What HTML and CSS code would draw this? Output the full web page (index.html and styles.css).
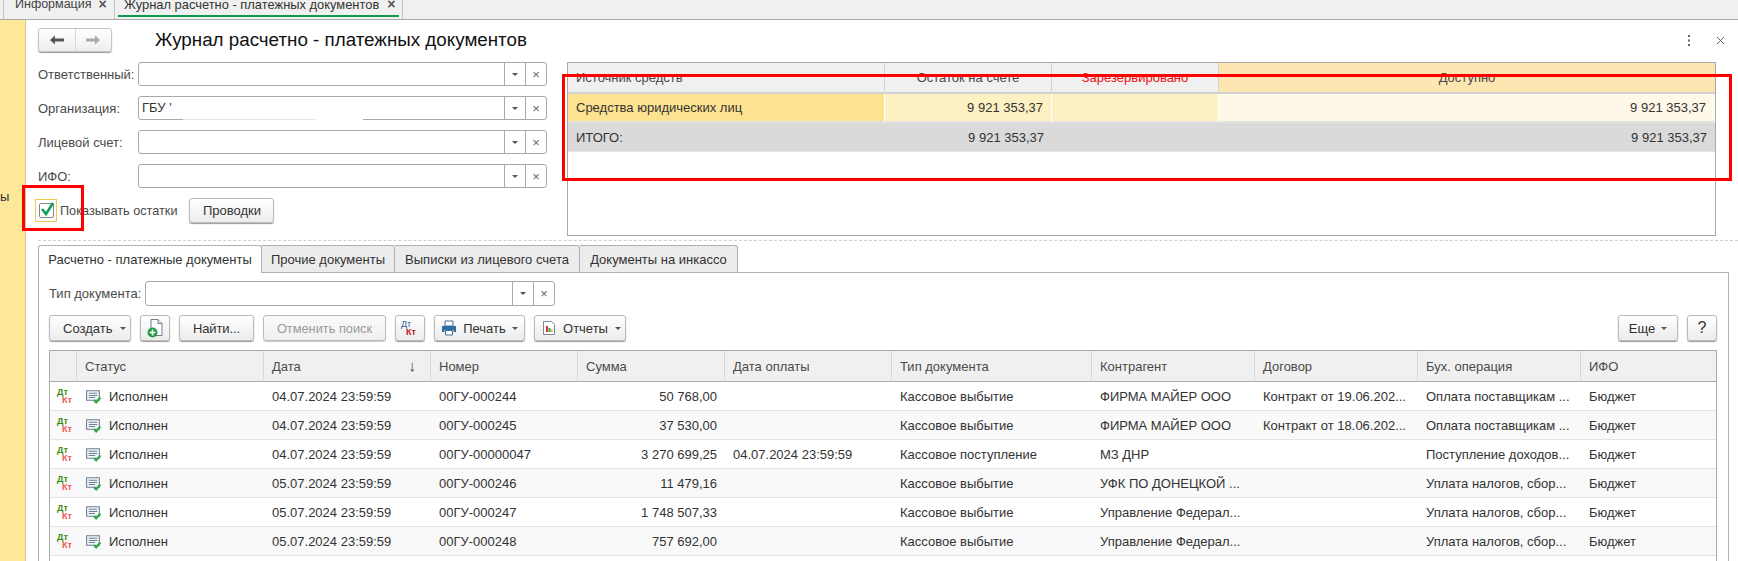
FILE: index.html
```html
<!DOCTYPE html>
<html lang="ru">
<head>
    <meta charset="UTF-8">
    <title>Журнал расчетно - платежных документов</title>
    <link rel="stylesheet" href="styles.css">
</head>
<body>
    <svg class="sprite" width="0" height="0">
        <symbol id="ico-status" viewBox="0 0 16 14">
            <path d="M1.500 1.500h12v9h-12z" fill="#f4f6f8" stroke="#6b7f92"/>
            <path d="M3.500 4h8M3.500 6h8M3.500 8h6" stroke="#6b7f92"/>
            <path d="M8.500 10.500l2 2 4-4.500" fill="none" stroke="#2fa84a" stroke-width="2"/>
        </symbol>
    </svg>

    <div class="tabbar">
        <div class="tab-item"><span class="tab-title">Информация</span> <span class="tab-close">×</span></div>
        <div class="tab-item tab-item-active">
            <span class="tab-title">Журнал расчетно - платежных документов</span>
            <span class="tab-close">×</span>
        </div>
    </div>

    <div class="main">
        <div class="sidebar"><span class="sidebar-text">ы</span></div>

        <div class="content">
            <div class="top-head">
                <div class="nav-buttons">
                    <span class="nav-btn">
                        <svg width="16" height="12" viewBox="0 0 16 12"><path d="M1 6l5-4.500v3h9v3H6v3z" fill="#555"/></svg>
                    </span>
                    <span class="nav-btn">
                        <svg width="16" height="12" viewBox="0 0 16 12"><path d="M15 6l-5-4.500v3H1v3h9v3z" fill="#aaa"/></svg>
                    </span>
                </div>
                <h1 class="page-title">Журнал расчетно - платежных документов</h1>
                <div class="top-menu">
                    <svg width="4" height="13" viewBox="0 0 4 13"><path d="M1 1h2v2H1zM1 5.500h2v2H1zM1 10h2v2H1z" fill="#666"/></svg>
                    <svg class="top-close" width="9" height="9" viewBox="0 0 9 9"><path d="M1 1l7 7M8 1l-7 7" stroke="#666" fill="none"/></svg>
                </div>
            </div>

            <div class="top-body">
                <div class="filter-form">
                    <div class="field">
                        <label class="field-label">Ответственный:</label>
                        <div class="combo"><span class="combo-value"></span><span class="combo-btn"><i class="caret"></i></span><span class="combo-btn">×</span></div>
                    </div>
                    <div class="field">
                        <label class="field-label">Организация:</label>
                        <div class="combo"><span class="combo-value">ГБУ '</span><span class="combo-btn"><i class="caret"></i></span><span class="combo-btn">×</span><span class="redact"></span></div>
                    </div>
                    <div class="field">
                        <label class="field-label">Лицевой счет:</label>
                        <div class="combo"><span class="combo-value"></span><span class="combo-btn"><i class="caret"></i></span><span class="combo-btn">×</span></div>
                    </div>
                    <div class="field">
                        <label class="field-label">ИФО:</label>
                        <div class="combo"><span class="combo-value"></span><span class="combo-btn"><i class="caret"></i></span><span class="combo-btn">×</span></div>
                    </div>
                    <div class="check-row">
                        <span class="check-focus">
                            <span class="check-box">
                                <svg width="17" height="16" viewBox="0 0 17 16"><path d="M3 8l4 5 7-11" fill="none" stroke="#0f9d58" stroke-width="2.500"/></svg>
                            </span>
                        </span>
                        <span class="check-label">Показывать остатки</span>
                        <button class="btn btn-post">Проводки</button>
                    </div>
                </div>

                <div class="balance-box">
                    <table class="balance-table">
                        <colgroup>
                            <col class="bal-col-1"><col class="bal-col-2"><col class="bal-col-3"><col>
                        </colgroup>
                        <thead>
                            <tr>
                                <th class="bal-left">Источник средств</th>
                                <th>Остаток на счете</th>
                                <th class="bal-reserved">Зарезервировано</th>
                                <th class="bal-avail">Доступно</th>
                            </tr>
                        </thead>
                        <tbody>
                            <tr class="bal-row">
                                <td class="bal-left bal-source">Средства юридических лиц</td>
                                <td class="bal-num bal-light">9 921 353,37</td>
                                <td class="bal-num bal-light"></td>
                                <td class="bal-num bal-pale">9 921 353,37</td>
                            </tr>
                            <tr class="bal-total">
                                <td class="bal-left">ИТОГО:</td>
                                <td class="bal-num">9 921 353,37</td>
                                <td class="bal-num"></td>
                                <td class="bal-num">9 921 353,37</td>
                            </tr>
                        </tbody>
                    </table>
                </div>
            </div>

            <div class="dash-line"></div>

            <div class="tabs">
                <div class="doc-tab doc-tab-active">Расчетно - платежные документы</div>
                <div class="doc-tab doc-tab-2">Прочие документы</div>
                <div class="doc-tab doc-tab-3">Выписки из лицевого счета</div>
                <div class="doc-tab doc-tab-4">Документы на инкассо</div>
            </div>

            <div class="tab-panel">
                <div class="field doc-field">
                    <label class="field-label doc-label">Тип документа:</label>
                    <div class="combo"><span class="combo-value"></span><span class="combo-btn"><i class="caret"></i></span><span class="combo-btn">×</span></div>
                </div>

                <div class="toolbar">
                    <button class="btn btn-create">Создать <i class="caret"></i></button>
                    <button class="btn btn-icon">
                        <svg width="16" height="20" viewBox="0 0 16 20">
                            <path d="M4 1.500h7l4 4v12H4z" fill="#fff" stroke="#6b7f92"/>
                            <path d="M11 1.500v4h4" fill="#dfe6ec" stroke="#6b7f92"/>
                            <circle cx="5.500" cy="14.500" r="5" fill="#1f9d45"/>
                            <path d="M5.500 11.500v6M2.500 14.500h6" stroke="#fff" stroke-width="1.600"/>
                        </svg>
                    </button>
                    <button class="btn btn-find">Найти...</button>
                    <button class="btn btn-cancel" disabled>Отменить поиск</button>
                    <button class="btn btn-icon btn-dtkt">
                        <span class="dtkt dtkt-tool"><b class="dt">Дт</b><b class="kt">Кт</b></span>
                    </button>
                    <button class="btn btn-print">
                        <svg width="16" height="16" viewBox="0 0 16 16">
                            <path d="M4 1h8v5H4z" fill="#fff" stroke="#4a6f94"/>
                            <path d="M1 6h14v6h-2.500v-2h-9v2H1z" fill="#2f6ea5"/>
                            <path d="M4.500 10.500h7v4.500h-7z" fill="#fff" stroke="#4a6f94"/>
                        </svg>
                        Печать <i class="caret"></i>
                    </button>
                    <button class="btn btn-reports">
                        <svg width="14" height="16" viewBox="0 0 14 16">
                            <path d="M1.500 1.500h8l3 3v10h-11z" fill="#fff" stroke="#7b8a99"/>
                            <path d="M4 6h2v6H4z" fill="#d93636"/>
                            <path d="M6.500 8h2v4h-2z" fill="#2fa84a"/>
                            <path d="M9 9.500h1.500V12H9z" fill="#e0a526"/>
                        </svg>
                        Отчеты <i class="caret"></i>
                    </button>
                    <button class="btn btn-more">Еще <i class="caret"></i></button>
                    <button class="btn btn-help">?</button>
                </div>

                <div class="grid-wrap">
                    <table class="doc-grid">
                        <colgroup>
                            <col class="c-ico"><col class="c-status"><col class="c-date"><col class="c-num"><col class="c-sum"><col class="c-paid"><col class="c-type"><col class="c-agent"><col class="c-contract"><col class="c-op"><col>
                        </colgroup>
                        <thead>
                            <tr>
                                <th></th>
                                <th>Статус</th>
                                <th class="th-sorted">Дата <span class="sort-arrow">↓</span></th>
                                <th>Номер</th>
                                <th>Сумма</th>
                                <th>Дата оплаты</th>
                                <th>Тип документа</th>
                                <th>Контрагент</th>
                                <th>Договор</th>
                                <th>Бух. операция</th>
                                <th>ИФО</th>
                            </tr>
                        </thead>
                        <tbody>
                            <tr>
                                <td class="td-ico"><span class="dtkt"><b class="dt">Дт</b><b class="kt">Кт</b></span></td>
                                <td class="td-status"><svg class="status-ico" width="17" height="15"><use href="#ico-status"/></svg>Исполнен</td>
                                <td>04.07.2024 23:59:59</td>
                                <td>00ГУ-000244</td>
                                <td class="td-sum">50 768,00</td>
                                <td></td>
                                <td>Кассовое выбытие</td>
                                <td>ФИРМА МАЙЕР ООО</td>
                                <td>Контракт от 19.06.202...</td>
                                <td>Оплата поставщикам ...</td>
                                <td>Бюджет</td>
                            </tr>
                            <tr>
                                <td class="td-ico"><span class="dtkt"><b class="dt">Дт</b><b class="kt">Кт</b></span></td>
                                <td class="td-status"><svg class="status-ico" width="17" height="15"><use href="#ico-status"/></svg>Исполнен</td>
                                <td>04.07.2024 23:59:59</td>
                                <td>00ГУ-000245</td>
                                <td class="td-sum">37 530,00</td>
                                <td></td>
                                <td>Кассовое выбытие</td>
                                <td>ФИРМА МАЙЕР ООО</td>
                                <td>Контракт от 18.06.202...</td>
                                <td>Оплата поставщикам ...</td>
                                <td>Бюджет</td>
                            </tr>
                            <tr>
                                <td class="td-ico"><span class="dtkt"><b class="dt">Дт</b><b class="kt">Кт</b></span></td>
                                <td class="td-status"><svg class="status-ico" width="17" height="15"><use href="#ico-status"/></svg>Исполнен</td>
                                <td>04.07.2024 23:59:59</td>
                                <td>00ГУ-00000047</td>
                                <td class="td-sum">3 270 699,25</td>
                                <td>04.07.2024 23:59:59</td>
                                <td>Кассовое поступление</td>
                                <td>МЗ ДНР</td>
                                <td></td>
                                <td>Поступление доходов...</td>
                                <td>Бюджет</td>
                            </tr>
                            <tr>
                                <td class="td-ico"><span class="dtkt"><b class="dt">Дт</b><b class="kt">Кт</b></span></td>
                                <td class="td-status"><svg class="status-ico" width="17" height="15"><use href="#ico-status"/></svg>Исполнен</td>
                                <td>05.07.2024 23:59:59</td>
                                <td>00ГУ-000246</td>
                                <td class="td-sum">11 479,16</td>
                                <td></td>
                                <td>Кассовое выбытие</td>
                                <td>УФК ПО ДОНЕЦКОЙ ...</td>
                                <td></td>
                                <td>Уплата налогов, сбор...</td>
                                <td>Бюджет</td>
                            </tr>
                            <tr>
                                <td class="td-ico"><span class="dtkt"><b class="dt">Дт</b><b class="kt">Кт</b></span></td>
                                <td class="td-status"><svg class="status-ico" width="17" height="15"><use href="#ico-status"/></svg>Исполнен</td>
                                <td>05.07.2024 23:59:59</td>
                                <td>00ГУ-000247</td>
                                <td class="td-sum">1 748 507,33</td>
                                <td></td>
                                <td>Кассовое выбытие</td>
                                <td>Управление Федерал...</td>
                                <td></td>
                                <td>Уплата налогов, сбор...</td>
                                <td>Бюджет</td>
                            </tr>
                            <tr>
                                <td class="td-ico"><span class="dtkt"><b class="dt">Дт</b><b class="kt">Кт</b></span></td>
                                <td class="td-status"><svg class="status-ico" width="17" height="15"><use href="#ico-status"/></svg>Исполнен</td>
                                <td>05.07.2024 23:59:59</td>
                                <td>00ГУ-000248</td>
                                <td class="td-sum">757 692,00</td>
                                <td></td>
                                <td>Кассовое выбытие</td>
                                <td>Управление Федерал...</td>
                                <td></td>
                                <td>Уплата налогов, сбор...</td>
                                <td>Бюджет</td>
                            </tr>
                        </tbody>
                    </table>
                </div>
            </div>
        </div>
    </div>

    <!-- red annotation frames drawn over the screenshot -->
    <div class="mark mark-check"></div>
    <div class="mark mark-balance"></div>
</body>
</html>
```

FILE: styles.css
```css
* {
    box-sizing: border-box;
}
html, body {
    margin: 0;
    height: 561px;
    overflow: hidden;
}
body {
    position: relative;
    display: flex;
    flex-direction: column;
    font-family: "Liberation Sans", Arial, sans-serif;
    font-size: 13px;
    color: #333;
    background: #fff;
}
.sprite {
    position: absolute;
}

/* top tabs */
.tabbar {
    display: flex;
    flex: none;
    height: 20px;
    padding-left: 3px;
    background: #f0f0f0;
    border-bottom: 1px solid #a9a9a9;
    overflow: hidden;
}
.tab-item {
    display: flex;
    align-items: flex-start;
    gap: 7px;
    width: 111px;
    padding-left: 11px;
    border-left: 1px solid #c4c4c4;
    font-size: 12.500px;
    line-height: 9px;
    color: #444;
}
.tab-item-active {
    position: relative;
    width: 289px;
    padding-left: 9px;
    gap: 8px;
    border-right: 1px solid #c4c4c4;
    font-size: 12.900px;
    color: #333;
}
.tab-item-active::after {
    content: "";
    position: absolute;
    left: 3px;
    right: 3px;
    top: 15px;
    height: 2px;
    background: #109a54;
}
.tab-close {
    font-weight: bold;
    font-size: 14px;
    color: #555;
}

.main {
    display: flex;
    flex: 1;
    min-height: 0;
}
.sidebar {
    flex: none;
    width: 26px;
    padding-top: 169px;
    background: #fde798;
    border-right: 1px solid #d2c898;
}
.sidebar-text {
    font-size: 13px;
    line-height: 14px;
}

.content {
    flex: 1;
    min-width: 0;
    padding: 8px 0 0 12px;
}

/* page head */
.top-head {
    display: flex;
    align-items: center;
    height: 24px;
}
.nav-buttons {
    display: flex;
    width: 74px;
    height: 24px;
    border: 1px solid #c4c4c4;
    border-radius: 3px;
    background: linear-gradient(#fff, #eee);
    box-shadow: 0 1px 1px #999;
}
.nav-btn {
    display: flex;
    flex: 1;
    align-items: center;
    justify-content: center;
}
.nav-btn + .nav-btn {
    border-left: 1px solid #d8d8d8;
}
.page-title {
    margin: 0 0 0 43px;
    font-size: 18.800px;
    font-weight: normal;
    color: #111;
}
.top-menu {
    display: flex;
    align-items: center;
    gap: 25px;
    margin-left: auto;
    padding-right: 13px;
}

.top-body {
    display: flex;
    gap: 20px;
    margin-top: 10px;
}

/* filter form */
.filter-form {
    display: flex;
    flex-direction: column;
    gap: 10px;
    width: 509px;
    flex: none;
}
.field {
    display: flex;
    align-items: center;
    height: 24px;
}
.field-label {
    width: 100px;
    flex: none;
    color: #4a4a4a;
}
.combo {
    position: relative;
    display: flex;
    flex: 1;
    height: 100%;
    border: 1px solid #a9a9a9;
    border-radius: 3px;
    background: #fff;
}
.combo-value {
    flex: 1;
    padding: 0 3px;
    line-height: 22px;
}
.combo-btn {
    display: flex;
    align-items: center;
    justify-content: center;
    width: 21px;
    border-left: 1px solid #a9a9a9;
    color: #666;
    font-size: 13px;
}
.caret {
    display: inline-block;
    width: 0;
    height: 0;
    border-left: 3px solid transparent;
    border-right: 3px solid transparent;
    border-top: 3px solid #555;
}
/* scrubbed-out part of the field's lower edge */
.redact {
    position: absolute;
    left: 44px;
    bottom: -1px;
    width: 180px;
    height: 1px;
    background: linear-gradient(90deg, rgba(255,255,255,0.7) 74%, #fff 74%);
}

.check-row {
    display: flex;
    align-items: center;
    margin-left: -3px;
    height: 25px;
}
.check-focus {
    display: flex;
    align-items: center;
    justify-content: center;
    flex: none;
    width: 22px;
    height: 23px;
    border: 1px solid #f2c94c;
}
.check-box {
    display: flex;
    width: 15px;
    height: 15px;
    border: 1px solid #888;
    border-radius: 2px;
}
.check-box svg {
    flex: none;
    margin: -3px 0 0 -1px;
}
.check-label {
    margin-left: 3px;
    color: #4a4a4a;
    font-size: 12.700px;
}

/* buttons */
.btn {
    display: inline-flex;
    align-items: center;
    justify-content: center;
    gap: 6px;
    height: 26px;
    padding: 0;
    border: 1px solid #bbb;
    border-radius: 3px;
    background: linear-gradient(#fff, #ececec);
    box-shadow: 0 1px 1px #999;
    font: inherit;
    color: #333;
}
.btn-post {
    width: 85px;
    height: 25px;
    margin-left: 12px;
}
.btn:disabled {
    color: #9a9a9a;
    background: linear-gradient(#fafafa, #efefef);
    box-shadow: 0 1px 1px #ccc;
}

/* balance table */
.balance-box {
    width: 1149px;
    height: 174px;
    border: 1px solid #a9a9a9;
}
.balance-table {
    width: 100%;
    table-layout: fixed;
    border-collapse: separate;
    border-spacing: 0;
}
.bal-col-1 {
    width: 317px;
}
.bal-col-2, .bal-col-3 {
    width: 167px;
}
.balance-table th {
    height: 31px;
    padding: 0 8px;
    background: #f0f0f0;
    border-right: 1px solid #d2d2d2;
    border-bottom: 2px solid #d2d2d2;
    font-weight: normal;
    color: #4a4a4a;
}
.balance-table th.bal-left {
    text-align: left;
}
.balance-table th.bal-reserved {
    color: #f01010;
}
.balance-table th.bal-avail {
    background: #fee6b2;
    border-right: 0;
}
.balance-table td {
    padding: 0 8px;
}
.bal-row td {
    height: 29px;
    border-right: 1px solid #fff;
    border-bottom: 2px solid #e2e2e2;
}
.bal-total td {
    height: 29px;
    background: #dadada;
    border-bottom: 1px solid #e6e6e6;
}
.bal-source {
    background: #fde28f;
}
.bal-light {
    background: #fdf0c2;
}
.bal-pale {
    background: #fff7e8;
}
.bal-num {
    text-align: right;
}

.dash-line {
    height: 0;
    margin-top: 4px;
    border-top: 1px dashed #d0d0d0;
}

/* document tabs */
.tabs {
    display: flex;
    height: 28px;
    margin-top: 4px;
}
.doc-tab {
    display: flex;
    align-items: center;
    justify-content: center;
    height: 28px;
    border: 1px solid #b0b0b0;
    border-left: 0;
    border-radius: 0 3px 0 0;
    background: #ececec;
    color: #333;
}
.doc-tab-active {
    position: relative;
    z-index: 1;
    width: 224px;
    border-left: 1px solid #b0b0b0;
    border-bottom: 0;
    border-radius: 3px 3px 0 0;
    background: #fff;
}
.doc-tab-2 {
    width: 133px;
}
.doc-tab-3 {
    width: 185px;
}
.doc-tab-4 {
    width: 158px;
}
.tab-panel {
    display: flex;
    flex-direction: column;
    width: 1691px;
    height: 290px;
    margin-top: -1px;
    padding: 8px 11px 0 10px;
    border: 1px solid #b0b0b0;
    border-bottom: 0;
}
.doc-field {
    width: 506px;
    height: 25px;
}
.doc-label {
    width: 96px;
}

/* toolbar */
.toolbar {
    display: flex;
    gap: 9px;
    margin-top: 9px;
}
.btn-create {
    width: 82px;
    justify-content: flex-start;
    gap: 8px;
    padding-left: 13px;
}
.btn-icon {
    width: 30px;
}
.btn-find {
    width: 75px;
    letter-spacing: -0.100px;
}
.btn-cancel {
    width: 123px;
    font-size: 12.800px;
}
.btn-print {
    width: 91px;
}
.btn-reports {
    width: 92px;
    padding-left: 3px;
    gap: 7px;
}
.btn-more {
    width: 60px;
    margin-left: auto;
}
.btn-help {
    width: 30px;
    font-size: 16px;
}

/* Dt Kt mark */
.dtkt {
    position: relative;
    display: inline-block;
    width: 18px;
    height: 17px;
    font-size: 9px;
    line-height: 9px;
}
.dt, .kt {
    position: absolute;
    font-weight: bold;
}
.dt {
    left: 0;
    top: 0;
    color: #3f8a12;
}
.kt {
    left: 5px;
    top: 8px;
    color: #f25555;
}
.dtkt-tool .dt {
    color: #2b6299;
    font-weight: normal;
}
.dtkt-tool .kt {
    color: #c01818;
}

/* documents list */
.grid-wrap {
    flex: 1;
    margin-top: 9px;
    border: 1px solid #a9a9a9;
    border-bottom: 0;
}
.doc-grid {
    width: 100%;
    table-layout: fixed;
    border-collapse: separate;
    border-spacing: 0;
}
.c-ico {
    width: 27px;
}
.c-status {
    width: 187px;
}
.c-date, .c-paid {
    width: 167px;
}
.c-num, .c-sum {
    width: 147px;
}
.c-type {
    width: 200px;
}
.c-agent, .c-contract, .c-op {
    width: 163px;
}
.doc-grid th {
    height: 31px;
    padding: 0 8px;
    background: #f0f0f0;
    border-right: 1px solid #d8d8d8;
    border-bottom: 1px solid #a9a9a9;
    font-weight: normal;
    text-align: left;
    color: #4a4a4a;
}
.doc-grid th:last-child {
    border-right: 0;
}
.th-sorted {
    position: relative;
}
.sort-arrow {
    position: absolute;
    right: 14px;
    top: 6px;
    font-size: 15px;
    line-height: 18px;
    color: #444;
}
.doc-grid td {
    height: 29px;
    padding: 0 8px;
    border-bottom: 1px solid #e4e4e4;
    white-space: nowrap;
    overflow: hidden;
}
.doc-grid tbody tr:nth-child(even) td {
    background: #f9f9f9;
}
.doc-grid td.td-ico {
    padding: 4px 0 0 7px;
}
.doc-grid td.td-sum {
    text-align: right;
}
.td-status {
    vertical-align: middle;
}
.status-ico {
    margin-right: 7px;
    vertical-align: -3px;
}

/* red annotation frames */
.mark {
    position: absolute;
    border: 3px solid #f00;
}
.mark-check {
    left: 22px;
    top: 185px;
    width: 62px;
    height: 46px;
}
.mark-balance {
    left: 562px;
    top: 74px;
    width: 1170px;
    height: 107px;
}
```
